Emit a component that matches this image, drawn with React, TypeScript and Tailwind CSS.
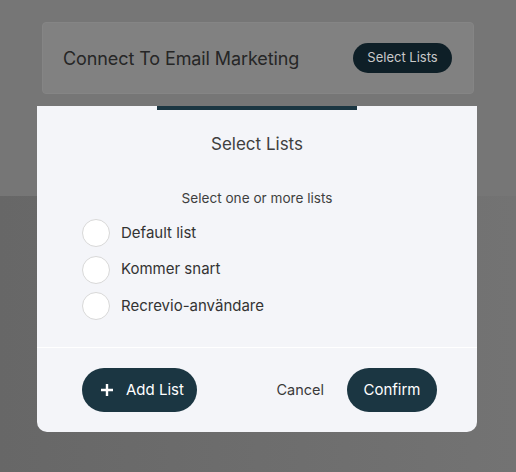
import React from "react";

const font = { fontFamily: "Inter, 'Liberation Sans', sans-serif" };

export default function App() {
  const items = ["Default list", "Kommer snart", "Recrevio-användare"];
  return (
    <div className="relative w-[516px] h-[472px] overflow-hidden" style={font}>
      <div className="flex flex-col h-full">
        <div className="h-[196px] bg-[#767676] px-[42px] pt-[22px]">
          <div className="h-[72px] rounded-[4px] border border-[#858585] bg-[#818181] flex items-center justify-between pl-[20px] pr-[21px]">
            <span className="text-[18px] text-[#262626] tracking-[-0.1px]">Connect To Email Marketing</span>
            <button className="h-[30px] w-[99px] rounded-full bg-[#0e1f27] text-[13px] text-[#c9c9c9]">Select Lists</button>
          </div>
        </div>
        <div className="flex-1 bg-gradient-to-r from-[#676767] to-[#737373]" />
      </div>

      <div className="absolute left-[37px] top-[106px] w-[440px] h-[326px] bg-[#f4f5f9] rounded-b-[10px] flex flex-col">
        <div className="flex justify-center">
          <div className="w-[200px] h-[4px] bg-[#1b3642]" />
        </div>
        <div className="flex flex-col items-center pt-[21px]">
          <h2 className="text-[17px] text-[#3f3f3f] leading-[26px]">Select Lists</h2>
          <p className="text-[13.6px] text-[#3f3f3f] mt-[31px] leading-[20px]">Select one or more lists</p>
        </div>
        <div className="flex flex-col gap-[8.5px] pl-[45px] mt-[11px]">
          {items.map((t) => (
            <label key={t} className="flex items-center gap-[11px]">
              <span className="w-[28px] h-[28px] rounded-full bg-white border border-[#d8d8d8]" />
              <span className="text-[15px] text-[#333]">{t}</span>
            </label>
          ))}
        </div>
        <div className="flex-1" />
        <div className="h-px bg-white" />
        <div className="h-[84px] flex items-center pl-[45px] pr-[40px]">
          <button className="h-[44px] w-[115px] rounded-full bg-[#1b3642] text-white text-[15px] flex items-center pl-[18px] gap-[12px]">
            <svg width="14" height="14" viewBox="0 0 14 14">
              <path d="M7 1v12M1 7h12" stroke="white" strokeWidth="2.4" />
            </svg>
            <span>Add List</span>
          </button>
          <div className="flex-1" />
          <button className="text-[14.5px] text-[#3a3a3a] mr-[23px]">Cancel</button>
          <button className="h-[44px] w-[90px] rounded-full bg-[#1b3642] text-white text-[15px]">Confirm</button>
        </div>
      </div>
    </div>
  );
}
